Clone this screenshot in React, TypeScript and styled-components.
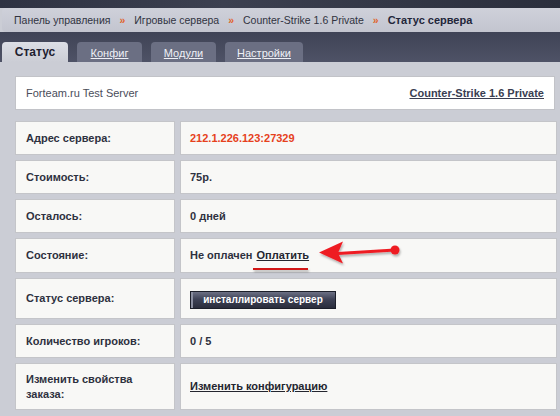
import { Fragment } from 'react';
import styled, { createGlobalStyle } from 'styled-components';

const GlobalStyle = createGlobalStyle`
  html, body {
    margin: 0;
    padding: 0;
    background: #cbcdd5;
    font-family: "Liberation Sans", Arial, sans-serif;
    font-size: 11px;
  }
`;

interface RowType {
    label: string;
    height: number;
    value: React.ReactNode;
}

const Page = styled.div`
  position: relative;
  width: 560px;
  height: 416px;
  overflow: hidden;
  background: #cbcdd5;
`;

const TopStrip = styled.div`
  height: 8px;
  background: linear-gradient(90deg, #2e3242, #3c4050 40%, #2a2e3c);
`;

const Breadcrumbs = styled.div`
  height: 24px;
  margin-left: 2px;
  padding-left: 12px;
  display: flex;
  align-items: center;
  gap: 9px;
  background: linear-gradient(#cfd1da, #c3c5cf);
  border-radius: 4px 0 0 4px;
  color: #2c2f3c;
  font-size: 10.5px;
`;

const Crumb = styled.span<{ $current?: boolean }>`
  font-weight: ${({ $current }) => ($current ? 700 : 400)};
  font-size: ${({ $current }) => ($current ? '11px' : '10.5px')};
  color: ${({ $current }) => ($current ? '#23263a' : '#30333f')};
`;

const Sep = styled.span`
  color: #e0642c;
  font-weight: 700;
`;

const TabBar = styled.div`
  height: 30px;
  padding: 10px 0 0 2px;
  box-sizing: border-box;
  display: flex;
  align-items: flex-end;
  gap: 9px;
  background: linear-gradient(#3f4356, #4e5266);
`;

const Tab = styled.div<{ $active?: boolean; $width: number }>`
  width: ${({ $width }) => $width}px;
  height: 20px;
  display: flex;
  align-items: center;
  justify-content: center;
  border-radius: 4px 4px 0 0;
  box-sizing: border-box;
  background: ${({ $active }) => ($active ? 'linear-gradient(#dcdee5, #cbcdd5)' : '#6b6f83')};
  color: ${({ $active }) => ($active ? '#1e2130' : '#eef0f6')};
  font-weight: ${({ $active }) => ($active ? 700 : 400)};
  font-size: ${({ $active }) => ($active ? '12px' : '11px')};
  text-decoration: ${({ $active }) => ($active ? 'none' : 'underline')};
  padding-top: ${({ $active }) => ($active ? '0' : '1px')};
`;

const Content = styled.div`
  padding: 14px 3px 0 15px;
  display: flex;
  flex-direction: column;
  gap: 11px;
`;

const Header = styled.div`
  height: 34px;
  box-sizing: border-box;
  margin-right: 2px;
  padding: 0 10px;
  display: flex;
  align-items: center;
  justify-content: space-between;
  background: #ffffff;
  border: 1px solid #c2c3c8;
`;

const ServerName = styled.span`
  color: #4a4d5a;
`;

const GameLink = styled.a`
  color: #3a3e52;
  font-weight: 700;
  text-decoration: underline;
`;

const Table = styled.div`
  display: grid;
  grid-template-columns: 160px 1fr;
  column-gap: 5px;
  row-gap: 5px;
`;

const Cell = styled.div<{ $height: number }>`
  height: ${({ $height }) => $height}px;
  box-sizing: border-box;
  padding: 0 10px;
  display: flex;
  align-items: center;
  background: #f8f8f6;
  border: 1px solid #c4c5c9;
  color: #2e3140;
  font-weight: 700;
  line-height: 15px;
`;

const ValueCell = styled(Cell)`
  padding-left: 9px;
  gap: 4px;
`;

const Address = styled.span`
  color: #e6411c;
`;

const Link = styled.a`
  color: #24262f;
  text-decoration: underline;
`;

const InstallButton = styled.button`
  width: 146px;
  height: 18px;
  margin-top: 2px;
  padding: 0;
  border: 1px solid #1c1f2a;
  background: linear-gradient(#6c7084, #3e4256 45%, #2a2d3c);
  box-shadow: inset 2px 0 0 #8a8ea0;
  color: #ffffff;
  font-family: "Liberation Sans", Arial, sans-serif;
  font-size: 10px;
  font-weight: 700;
`;

const Overlay = styled.svg`
  position: absolute;
  left: 0;
  top: 0;
  pointer-events: none;
`;

const rows: RowType[] = [
    { label: 'Адрес сервера:', height: 34, value: <Address>212.1.226.123:27329</Address> },
    { label: 'Стоимость:', height: 34, value: '75р.' },
    { label: 'Осталось:', height: 34, value: '0 дней' },
    { label: 'Состояние:', height: 35, value: <>Не оплачен <Link>Оплатить</Link></> },
    { label: 'Статус сервера:', height: 41, value: <InstallButton>инсталлировать сервер</InstallButton> },
    { label: 'Количество игроков:', height: 34, value: '0 / 5' },
    { label: 'Изменить свойства заказа:', height: 47, value: <Link>Изменить конфигурацию</Link> },
];

const App = () => {
    return (
        <Page>
            <GlobalStyle />
            <TopStrip />
            <Breadcrumbs>
                <Crumb>Панель управления</Crumb>
                <Sep>»</Sep>
                <Crumb>Игровые сервера</Crumb>
                <Sep>»</Sep>
                <Crumb>Counter-Strike 1.6 Private</Crumb>
                <Sep>»</Sep>
                <Crumb $current>Статус сервера</Crumb>
            </Breadcrumbs>
            <TabBar>
                <Tab $active $width={66}>Статус</Tab>
                <Tab $width={65}>Конфиг</Tab>
                <Tab $width={65}>Модули</Tab>
                <Tab $width={78}>Настройки</Tab>
            </TabBar>
            <Content>
                <Header>
                    <ServerName>Forteam.ru Test Server</ServerName>
                    <GameLink>Counter-Strike 1.6 Private</GameLink>
                </Header>
                <Table>
                    {rows.map((row) => (
                        <Fragment key={row.label}>
                            <Cell $height={row.height}>{row.label}</Cell>
                            <ValueCell $height={row.height}>{row.value}</ValueCell>
                        </Fragment>
                    ))}
                </Table>
            </Content>
            <Overlay width="560" height="416" viewBox="0 0 560 416">
                <defs>
                    <filter id="shade" x="-20%" y="-50%" width="140%" height="200%">
                        <feDropShadow dx="1" dy="2" stdDeviation="1.2" floodColor="#000" floodOpacity="0.3" />
                    </filter>
                </defs>
                <g filter="url(#shade)">
                    <line x1="253" y1="269" x2="308" y2="269" stroke="#d11414" strokeWidth="2" />
                    <line x1="338" y1="253.5" x2="395" y2="250" stroke="#ee1c24" strokeWidth="3" />
                    <circle cx="395" cy="250" r="4.5" fill="#ee1c24" />
                    <path d="M319 252.5 L343 241.5 L338 253 L343 263.5 Z" fill="#ee1c24" />
                </g>
            </Overlay>
        </Page>
    );
};

export default App;
